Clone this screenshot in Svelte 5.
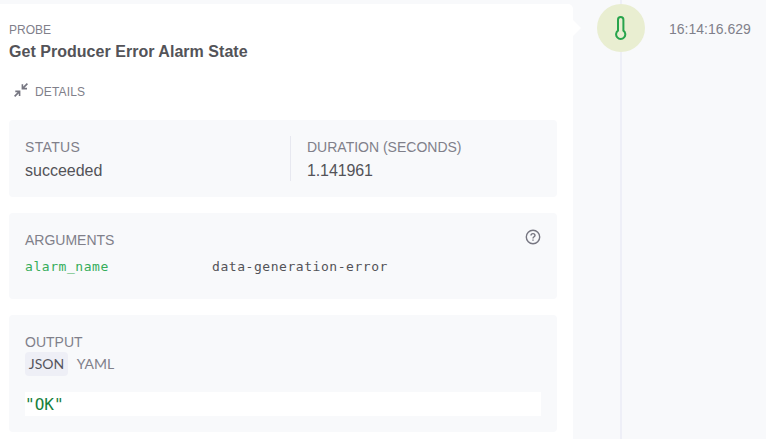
<script>
  const formats = ['JSON', 'YAML'];
  let active = $state('JSON');
</script>

<div class="page">
  <main class="panel">
    <header>
      <div class="kind">PROBE</div>
      <h1>Get Producer Error Alarm State</h1>
      <div class="details">
        <svg width="14" height="14" viewBox="0 0 14 14" fill="none" stroke="#767681" stroke-width="1.6">
          <path d="M13.4.6 8.4 5.6M8.4 1.2v4.4h4.6M.6 13.4l5-5M1.3 8.4h4.3v4.5" />
        </svg>
        <span>DETAILS</span>
      </div>
    </header>

    <section class="card stats">
      <div class="stat">
        <div class="label status">STATUS</div>
        <div class="value">succeeded</div>
      </div>
      <div class="stat second">
        <div class="label">DURATION (SECONDS)</div>
        <div class="value number">1.141961</div>
      </div>
    </section>

    <section class="card arguments">
      <div class="heading">
        <div class="label">ARGUMENTS</div>
        <svg width="16" height="16" viewBox="0 0 16 16" fill="none" stroke="#767681" stroke-width="1.4">
          <circle cx="8" cy="8" r="6.7" />
          <path d="M6 6.6C6 5.4 6.9 4.6 8 4.6s2 .8 2 1.8C10 7.7 8 7.8 8 9.4M8 10.6v1.2" />
        </svg>
      </div>
      <div class="row">
        <span class="key">alarm_name</span>
        <span>data-generation-error</span>
      </div>
    </section>

    <section class="card output">
      <div class="label">OUTPUT</div>
      <div class="tabs">
        {#each formats as format}
          <button class:active={active === format} onclick={() => (active = format)}>{format}</button>
        {/each}
      </div>
      <pre>"OK"</pre>
    </section>
  </main>

  <aside>
    <div class="track">
      <div class="badge">
        <svg width="12" height="24" viewBox="0 0 12 24" fill="none" stroke="#28a44c" stroke-width="2">
          <path d="M3 14.6V3.7a2.7 2.7 0 0 1 5.4 0v10.9a4.6 4.6 0 1 1-5.4 0Z" />
        </svg>
      </div>
    </div>
    <time>16:14:16.629</time>
  </aside>
</div>

<style>
  .page {
    display: flex;
    width: 766px;
    height: 439px;
    overflow: hidden;
    background: #f8f9fb;
    color: #535358;
    font-family: "Liberation Sans", Arial, sans-serif;
  }
  .panel {
    position: relative;
    box-sizing: border-box;
    width: 573px;
    height: 440px;
    margin-top: 4px;
    padding: 16px 16px 0 9px;
    background: #fff;
    border-top-right-radius: 5px;
  }
  .panel::after {
    content: "";
    position: absolute;
    left: 573px;
    top: 16px;
    border: 8px solid transparent;
    border-left-color: #fff;
    border-right: 0;
  }
  header { height: 100px; }
  .kind {
    font-size: 12px;
    line-height: 20px;
    color: #80808a;
  }
  h1 {
    margin: 0;
    font-size: 16px;
    line-height: 24px;
    font-weight: 700;
    letter-spacing: 0.03px;
  }
  .details {
    display: flex;
    gap: 7px;
    height: 20px;
    margin-top: 18px;
    padding-left: 5px;
    font-size: 12px;
    line-height: 20px;
    letter-spacing: 0.14px;
    color: #80808a;
  }
  .details svg { margin-top: 1px; }
  .card {
    box-sizing: border-box;
    padding: 16px;
    border-radius: 4px;
    background: #f8f9fb;
  }
  .label {
    height: 21px;
    font-size: 14px;
    line-height: 23px;
    color: #80808a;
    white-space: nowrap;
  }
  .status { letter-spacing: 0.35px; }
  .value {
    padding-top: 2px;
    font-size: 16px;
    line-height: 24px;
  }
  .number { letter-spacing: -0.12px; }
  .stats { display: flex; height: 77px; }
  .stat { width: 265px; height: 45px; }
  .second {
    box-sizing: border-box;
    padding-left: 16px;
    width: 251px;
    border-left: 1px solid #e7e8f0;
  }
  .arguments { height: 86px; margin-top: 16px; }
  .heading { display: flex; justify-content: space-between; }
  .row {
    display: grid;
    grid-template-columns: 187px 1fr;
    margin-top: 6px;
    font: 13px/21px "DejaVu Sans Mono", monospace;
    letter-spacing: 0.55px;
  }
  .key { color: #35ad5a; }
  .output { height: 117px; margin-top: 16px; }
  .tabs { display: flex; gap: 6px; }
  button {
    width: 43px;
    height: 24px;
    padding: 0;
    border: 0;
    border-radius: 4px;
    background: none;
    color: #80808a;
    font: 14px/24px Lato, "Noto Sans", sans-serif;
    text-align: center;
  }
  button.active { background: #eeeff6; color: #55555d; }
  pre {
    margin: 16px 0 0;
    height: 24px;
    background: #fff;
    color: #16803c;
    font: 16px/26px "DejaVu Sans Mono", monospace;
  }
  aside { display: flex; width: 193px; }
  .track {
    width: 48px;
    margin-left: 24px;
    background: linear-gradient(#eeeff7, #eeeff7) 23px 0 / 2px 100% no-repeat;
  }
  .badge {
    display: flex;
    align-items: center;
    justify-content: center;
    width: 48px;
    height: 48px;
    margin-top: 4px;
    border-radius: 50%;
    background: #e9eed1;
  }
  time {
    margin: 19px 0 0 24px;
    font-size: 14px;
    line-height: 21px;
    color: #80808a;
  }
</style>
